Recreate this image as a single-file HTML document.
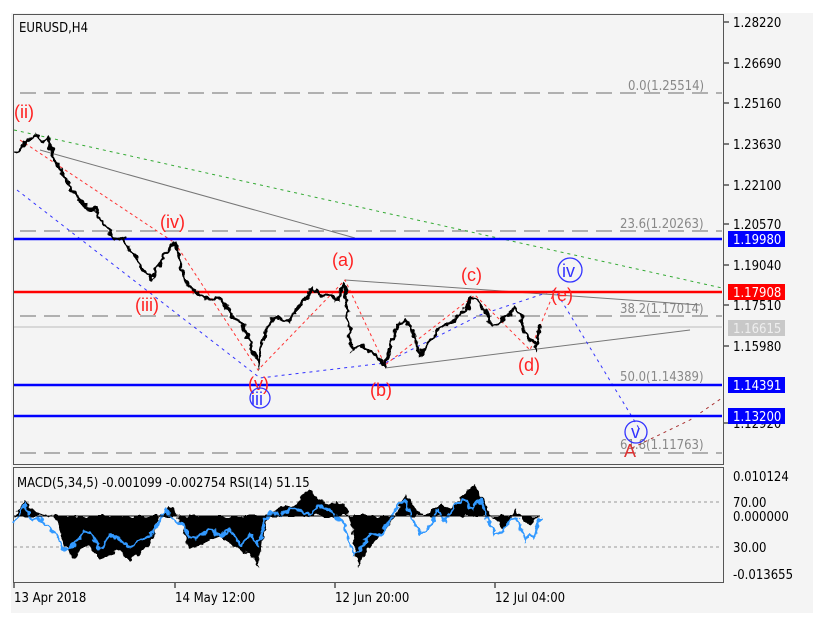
<!DOCTYPE html>
<html><head><style>
body{margin:0;background:#fff;width:820px;height:630px;overflow:hidden;font-family:"Liberation Sans",sans-serif}
svg{position:absolute;left:0;top:0}
text{font-family:"DejaVu Sans Condensed","Liberation Sans",sans-serif;font-size:13px}
.w{font-family:"Liberation Sans",sans-serif;font-size:18px}
</style></head><body>
<svg width="820" height="630" viewBox="0 0 820 630">
<defs>
<filter id="j" x="-5%" y="-10%" width="110%" height="120%"><feTurbulence type="fractalNoise" baseFrequency="0.15" numOctaves="2" seed="3"/><feDisplacementMap in="SourceGraphic" scale="8" xChannelSelector="R" yChannelSelector="G"/></filter>
</defs>
<rect x="11" y="13" width="802" height="600" fill="#f4f4f4"/>
<rect x="13.5" y="14.5" width="710" height="450" fill="none" stroke="#555"/>
<rect x="13.5" y="467.5" width="710" height="115" fill="none" stroke="#555"/>
<g stroke="#888" stroke-dasharray="16,8" stroke-width="1.3">
<line x1="20" y1="93" x2="722" y2="93"/><line x1="20" y1="231" x2="722" y2="231"/>
<line x1="20" y1="316" x2="722" y2="316"/><line x1="20" y1="453" x2="722" y2="453"/>
</g>
<line x1="14" y1="327" x2="722" y2="327" stroke="#bbb"/>
<g fill="#888"><text x="628" y="90">0.0(1.25514)</text><text x="620" y="228">23.6(1.20263)</text><text x="620" y="313">38.2(1.17014)</text><text x="620" y="381">50.0(1.14389)</text><text x="620" y="449">61.8(1.11763)</text></g>
<line x1="14" y1="130" x2="722" y2="288" stroke="#3a3" stroke-dasharray="3,4"/>
<line x1="40" y1="150" x2="355" y2="238" stroke="#777"/>
<line x1="345" y1="280" x2="700" y2="305" stroke="#777"/>
<line x1="385" y1="368" x2="690" y2="330" stroke="#777"/>
<polyline points="17,190 260,378 385,363 480,315 555,290 640,430" fill="none" stroke="#33f" stroke-dasharray="3,4"/>
<polyline points="20,140 175,243 258,370 345,280 385,365 475,295 530,350 555,290" fill="none" stroke="#f33" stroke-dasharray="3,3"/>
<polyline points="632,448 690,420 722,398" fill="none" stroke="#a33" stroke-dasharray="3,4"/>
<line x1="14" y1="239" x2="722" y2="239" stroke="#00f" stroke-width="2.5"/>
<line x1="14" y1="292" x2="722" y2="292" stroke="#f00" stroke-width="2.5"/>
<line x1="14" y1="385" x2="722" y2="385" stroke="#00f" stroke-width="2.5"/>
<line x1="14" y1="416" x2="722" y2="416" stroke="#00f" stroke-width="2.5"/>
<g filter="url(#j)">
<polyline points="15,152 22,148 28,140 35,135 42,142 48,138 55,160 60,170 65,178 72,190 80,200 88,210 95,208 100,218 108,230 115,240 122,238 130,250 138,262 145,272 152,278 158,268 165,255 172,245 176,243 180,262 185,282 192,290 200,295 210,300 220,298 228,310 236,320 244,325 250,345 258,365 262,345 266,330 272,320 280,318 288,322 296,310 305,300 312,288 320,295 330,296 338,300 345,283 348,322 352,350 360,345 368,350 376,355 385,366 392,340 398,325 405,320 412,330 420,355 428,345 436,332 445,325 455,320 465,310 472,297 478,302 485,310 492,325 500,322 508,315 515,308 520,315 525,332 532,340 536,348 540,325" fill="none" stroke="#000" stroke-width="3"/>
</g>
<g fill="#f22"><text class="w" x="14" y="118">(ii)</text><text class="w" x="160" y="228">(iv)</text><text class="w" x="135" y="311">(iii)</text><text class="w" x="248" y="390">(v)</text><text class="w" x="332" y="266">(a)</text><text class="w" x="370" y="396">(b)</text><text class="w" x="461" y="281">(c)</text><text class="w" x="518" y="371">(d)</text><text class="w" x="551" y="301">(e)</text></g>
<g fill="none" stroke="#33f" stroke-width="1.3"><circle cx="260" cy="398" r="10"/><circle cx="570" cy="270" r="12"/><circle cx="636" cy="432" r="11"/></g>
<g fill="#33f"><text class="w" x="251" y="405">iii</text><text class="w" x="562" y="277">iv</text><text class="w" x="631" y="438">v</text></g>
<text class="w" x="624" y="457" fill="#d33">A</text>
<text x="19" y="32" fill="#000">EURUSD,H4</text>
<g fill="#000"><text x="733" y="27">1.28220</text><text x="733" y="68">1.26690</text><text x="733" y="108">1.25160</text><text x="733" y="149">1.23630</text><text x="733" y="190">1.22100</text><text x="733" y="229">1.20570</text><text x="733" y="270">1.19040</text><text x="733" y="310">1.17510</text><text x="733" y="351">1.15980</text><text x="733" y="428">1.12920</text></g>
<g stroke="#000"><line x1="724" y1="22" x2="729" y2="22"/><line x1="724" y1="63" x2="729" y2="63"/><line x1="724" y1="103" x2="729" y2="103"/><line x1="724" y1="144" x2="729" y2="144"/><line x1="724" y1="185" x2="729" y2="185"/><line x1="724" y1="224" x2="729" y2="224"/><line x1="724" y1="265" x2="729" y2="265"/><line x1="724" y1="305" x2="729" y2="305"/><line x1="724" y1="346" x2="729" y2="346"/><line x1="724" y1="423" x2="729" y2="423"/></g>
<rect x="728" y="231" width="57" height="16" fill="#00f"/><text x="733" y="244" fill="#fff">1.19980</text>
<rect x="728" y="284" width="57" height="16" fill="#f00"/><text x="733" y="297" fill="#fff">1.17908</text>
<rect x="728" y="320" width="57" height="16" fill="#c8c8c8"/><text x="733" y="333" fill="#eee">1.16615</text>
<rect x="728" y="377" width="57" height="16" fill="#00f"/><text x="733" y="390" fill="#fff">1.14391</text>
<rect x="728" y="408" width="57" height="16" fill="#00f"/><text x="733" y="421" fill="#fff">1.13200</text>
<g stroke="#999" stroke-dasharray="3,3"><line x1="14" y1="502" x2="722" y2="502"/><line x1="14" y1="547" x2="722" y2="547"/></g>
<g filter="url(#j)">
<polygon points="14,516 20,510 25,500 30,508 35,512 45,515 55,516 60,530 65,545 70,555 75,560 80,550 90,545 100,560 110,555 120,550 130,560 140,555 150,545 155,530 160,516 165,510 170,505 178,516 185,535 190,550 200,545 210,540 220,535 230,545 240,550 250,555 255,560 258,568 262,540 268,518 275,510 285,505 292,508 300,500 305,492 310,490 318,498 325,505 335,502 345,505 350,520 355,545 358,568 362,560 368,550 375,540 385,530 395,516 400,505 405,495 410,500 418,510 425,516 432,510 440,505 450,508 460,500 468,490 474,485 480,495 486,505 492,516 500,525 505,530 512,516 517,510 522,520 530,525 535,520 540,516" fill="#000"/>
<polyline points="14,525 20,515 25,505 32,520 38,518 45,522 55,535 65,550 75,545 85,530 95,540 100,550 110,535 120,540 130,548 140,540 150,535 158,525 165,510 175,520 182,525 190,538 200,535 210,530 220,535 230,530 240,545 250,535 258,545 265,520 272,512 280,515 290,510 300,510 310,515 320,505 330,510 340,520 345,525 350,545 355,555 362,545 370,535 380,535 390,520 398,505 405,500 412,520 420,535 430,525 438,510 445,520 455,505 465,500 472,510 480,500 488,520 495,535 505,530 510,518 518,520 524,540 530,535 535,538 540,518" fill="none" stroke="#3399ff" stroke-width="2.4"/>
</g>
<line x1="14" y1="516" x2="540" y2="516" stroke="#000"/>
<text x="17" y="487" fill="#000">MACD(5,34,5) -0.001099 -0.002754 RSI(14) 51.15</text>
<g fill="#000"><text x="733" y="481">0.010124</text><text x="733" y="507">70.00</text><text x="733" y="521">0.000000</text><text x="733" y="552">30.00</text><text x="733" y="579">-0.013655</text></g>
<g fill="#000"><text x="14" y="602">13 Apr 2018</text><text x="175" y="602">14 May 12:00</text><text x="335" y="602">12 Jun 20:00</text><text x="495" y="602">12 Jul 04:00</text></g>
<g stroke="#000"><line x1="14" y1="583" x2="14" y2="588"/><line x1="175" y1="583" x2="175" y2="588"/><line x1="335" y1="583" x2="335" y2="588"/><line x1="495" y1="583" x2="495" y2="588"/></g>
</svg>
</body></html>
